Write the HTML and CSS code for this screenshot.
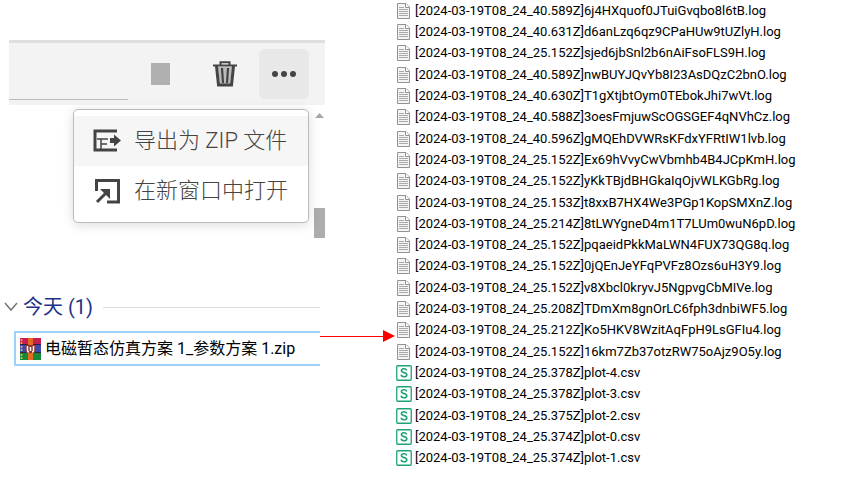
FILE: index.html
```html
<!DOCTYPE html>
<html lang="zh-CN">
<head>
<meta charset="utf-8">
<meta name="viewport" content="width=device-width, initial-scale=1">
<title>导出为 ZIP 文件</title>
<link rel="stylesheet" href="styles.css">
</head>
<body>
<svg class="sprite" aria-hidden="true">
  <symbol id="log" viewBox="0 0 13 16">
    <path d="M.5.5h8.500l3.500 3.500v11.500h-12z" fill="#f4f4f4" stroke="#929292"/>
    <path d="M8.500.5v4h4" fill="#fff" stroke="#929292"/>
    <path d="M2 4.500h5M2 6.500h9M2 8.500h9M2 10.500h9M2 12.500h9" stroke="#aaa"/>
  </symbol>
  <symbol id="csv" viewBox="0 0 16 16">
    <rect x=".75" y=".75" width="14.500" height="14.500" rx="1" fill="#fff" stroke="#1da374" stroke-width="1.300"/>
    <path d="M10.700 5.400C10.300 4.200 9.300 3.700 8 3.700c-1.500 0-2.600.7-2.600 1.900 0 2.700 5.400 1.300 5.400 4.100 0 1.300-1.200 2-2.800 2-1.500 0-2.600-.6-2.900-1.900" fill="none" stroke="#1da374" stroke-width="1.600"/>
  </symbol>
</svg>
<main class="page">
  <div class="left">
    <section class="viewer">
      <div class="toolbar">
        <input class="field" type="text" aria-label="名称">
        <button class="tool" aria-label="停止"><svg width="19" height="22"><path d="M0 0h19v22H0z" fill="#b0b0b0"/></svg></button>
        <button class="tool" aria-label="删除"><svg width="24" height="26" viewBox="0 0 24 26" fill="none" stroke="#444"><path d="M5 6h14l-2 18H7z" fill="#bbb" stroke="none"/><path d="M0 4.500h24" stroke-width="2"/><path d="M7.500 4V1.200h9V4" stroke-width="2"/><path d="M3.500 5l2 19h13l2-19" stroke-width="3"/><path d="M9 7l1 15M15 7l-1 15" stroke-width="2.200"/></svg></button>
        <button class="tool more" aria-label="更多" aria-expanded="true"><svg width="26" height="8" fill="#444"><circle cx="4" cy="4" r="3"/><circle cx="13" cy="4" r="3"/><circle cx="22" cy="4" r="3"/></svg></button>
      </div>
      <div class="track">
        <svg width="9" height="5"><path d="M0 5l4.500-5L9 5z" fill="#a8a8a8"/></svg>
        <span class="thumb"></span>
      </div>
      <div class="menu">
        <button class="item active"><svg width="28" height="24" viewBox="0 0 28 24" fill="none" stroke="#444"><path d="M24 2H2v19h22" stroke-width="3"/><path d="M4 10h11M8 10v10M8 15h6" stroke-width="1.500"/><path d="M17 9h4V5.500l7 6-7 6V14h-4z" fill="#444" stroke="none"/></svg><span>导出为 ZIP 文件</span></button>
        <button class="item"><svg width="28" height="26" viewBox="0 0 28 26" fill="none" stroke="#444" stroke-width="3"><path d="M3.500 13V2.500h22v21.500H14"/><path d="M4 24L14 14"/><path d="M7 11h10v10z" fill="#444" stroke="none"/></svg><span>在新窗口中打开</span></button>
      </div>
    </section>
    <section class="folder">
      <h2 class="group"><svg width="14" height="10" fill="none" stroke="#777" stroke-width="1.500"><path d="M1 1l6 7 6-7"/></svg>今天 (1)</h2>
      <a class="archive" href="#files">
        <svg width="21" height="24" viewBox="0 0 21 24"><path d="M0 1h21v7H0z" fill="#c51f52"/><path d="M0 8h21v8H0z" fill="#3f48ae"/><path d="M0 16h21v7H0z" fill="#148a38"/><path d="M0 7.500h21M0 15.500h21" stroke="#312040"/><path d="M1.500 2v5M1.500 9v5M1.500 17v5" stroke="#ffb72d" stroke-width="1.500" stroke-dasharray="2 1"/><path d="M8 1h5v22H8z" fill="#e76a20"/><path d="M6 8h9v8H6z" fill="#8e342d"/><path d="M7.500 9v4.500q0 1.500 1.500 1.500M13.500 9v4.500q0 1.500-1.500 1.500" fill="none" stroke="#fff" stroke-width="1.500"/><path d="M10.500 10v4" stroke="#fff" stroke-width="1.500"/></svg>
        <span>电磁暂态仿真方案 1_参数方案 1.zip</span>
      </a>
    </section>
  </div>
  <div class="link"><span class="line"></span><svg width="12" height="12"><path d="M0 0l12 6-12 6z" fill="#f00"/></svg></div>
  <ul class="files" id="files">
    <li><svg class="log"><use href="#log"/></svg>[2024-03-19T08_24_40.589Z]6j4HXquof0JTuiGvqbo8l6tB.log</li>
    <li><svg class="log"><use href="#log"/></svg>[2024-03-19T08_24_40.631Z]d6anLzq6qz9CPaHUw9tUZlyH.log</li>
    <li><svg class="log"><use href="#log"/></svg>[2024-03-19T08_24_25.152Z]sjed6jbSnl2b6nAiFsoFLS9H.log</li>
    <li><svg class="log"><use href="#log"/></svg>[2024-03-19T08_24_40.589Z]nwBUYJQvYb8I23AsDQzC2bnO.log</li>
    <li><svg class="log"><use href="#log"/></svg>[2024-03-19T08_24_40.630Z]T1gXtjbtOym0TEbokJhi7wVt.log</li>
    <li><svg class="log"><use href="#log"/></svg>[2024-03-19T08_24_40.588Z]3oesFmjuwScOGSGEF4qNVhCz.log</li>
    <li><svg class="log"><use href="#log"/></svg>[2024-03-19T08_24_40.596Z]gMQEhDVWRsKFdxYFRtIW1lvb.log</li>
    <li><svg class="log"><use href="#log"/></svg>[2024-03-19T08_24_25.152Z]Ex69hVvyCwVbmhb4B4JCpKmH.log</li>
    <li><svg class="log"><use href="#log"/></svg>[2024-03-19T08_24_25.152Z]yKkTBjdBHGkaIqOjvWLKGbRg.log</li>
    <li><svg class="log"><use href="#log"/></svg>[2024-03-19T08_24_25.153Z]t8xxB7HX4We3PGp1KopSMXnZ.log</li>
    <li><svg class="log"><use href="#log"/></svg>[2024-03-19T08_24_25.214Z]8tLWYgneD4m1T7LUm0wuN6pD.log</li>
    <li><svg class="log"><use href="#log"/></svg>[2024-03-19T08_24_25.152Z]pqaeidPkkMaLWN4FUX73QG8q.log</li>
    <li><svg class="log"><use href="#log"/></svg>[2024-03-19T08_24_25.152Z]0jQEnJeYFqPVFz8Ozs6uH3Y9.log</li>
    <li><svg class="log"><use href="#log"/></svg>[2024-03-19T08_24_25.152Z]v8Xbcl0kryvJ5NgpvgCbMIVe.log</li>
    <li><svg class="log"><use href="#log"/></svg>[2024-03-19T08_24_25.208Z]TDmXm8gnOrLC6fph3dnbiWF5.log</li>
    <li><svg class="log"><use href="#log"/></svg>[2024-03-19T08_24_25.212Z]Ko5HKV8WzitAqFpH9LsGFIu4.log</li>
    <li><svg class="log"><use href="#log"/></svg>[2024-03-19T08_24_25.152Z]16km7Zb37otzRW75oAjz9O5y.log</li>
    <li><svg class="csv"><use href="#csv"/></svg>[2024-03-19T08_24_25.378Z]plot-4.csv</li>
    <li><svg class="csv"><use href="#csv"/></svg>[2024-03-19T08_24_25.378Z]plot-3.csv</li>
    <li><svg class="csv"><use href="#csv"/></svg>[2024-03-19T08_24_25.375Z]plot-2.csv</li>
    <li><svg class="csv"><use href="#csv"/></svg>[2024-03-19T08_24_25.374Z]plot-0.csv</li>
    <li><svg class="csv"><use href="#csv"/></svg>[2024-03-19T08_24_25.374Z]plot-1.csv</li>
  </ul>
</main>
</body>
</html>
```
FILE: styles.css
```css
* { box-sizing: border-box; }
body { margin: 0; background: #fff; color: #000; font-family: Roboto, "Noto Sans CJK SC", sans-serif; }
svg { display: block; flex: none; }
.sprite { position: absolute; width: 0; height: 0; }
button { border: 0; padding: 0; background: none; font: inherit; color: inherit; }

.page { display: grid; grid-template-columns: 320fr 76fr 458fr; min-height: 100vh; }
.left { padding-top: 40px; min-width: 0; }

.viewer { position: relative; margin: 0 -5px 0 9px; }
.toolbar { display: flex; align-items: center; gap: 15px; height: 65px; padding-right: 16px; background: #f3f3f3; border-top: 3px solid #dfdfdf; }
.field { flex: 1; min-width: 0; height: 52px; margin-right: -8px; border: 0; border-bottom: 1px solid #bbb; background: none; outline: 0; }
.tool { display: grid; place-items: center; width: 50px; height: 50px; border-radius: 6px; }
.more { margin-left: -6px; background: #e8e8e8; }
.track { display: flex; flex-direction: column; align-items: center; justify-content: space-between; width: 11px; height: 133px; margin-left: auto; padding-top: 8px; }
.thumb { width: 11px; height: 30px; background: #adadad; }

.menu { position: absolute; top: 69px; right: 16px; width: 236px; padding: 6px 0; border: 1px solid #bbb; border-radius: 5px; background: #fff; box-shadow: 0 2px 12px rgba(0, 0, 0, .14); }
.item { display: flex; align-items: center; gap: 13px; width: 100%; height: 50px; padding-left: 19px; color: #444; font-size: 22px; font-weight: 300; line-height: 32px; white-space: nowrap; }
.active { background: #f6f6f6; }

.folder { margin-top: 54px; }
.group { display: flex; align-items: center; gap: 5px; margin: 0; padding-left: 4px; color: #1e3287; font-size: 20px; font-weight: 400; line-height: 30px; }
.group::after { content: ""; flex: 1; height: 1px; margin-left: 5px; background: #ddd; }
.archive { display: flex; align-items: center; gap: 4px; height: 35px; margin: 9px 0 0 14px; padding-left: 4px; border: 2px solid #9dd2fb; border-right: 0; color: #000; font-size: 16px; line-height: 24px; text-decoration: none; white-space: nowrap; }

.link { display: flex; align-items: center; height: 12px; margin: 330px 1px 0 0; }
.line { flex: 1; height: 1px; background: #f00; }

.files { display: grid; grid-auto-rows: 1fr; margin: 0; padding: 0 0 8px; list-style: none; font-size: 13px; line-height: 20px; }
.files li { display: flex; align-items: center; white-space: nowrap; }
.log { width: 13px; height: 16px; margin: 0 5px 0 1px; }
.csv { width: 16px; height: 16px; margin-right: 3px; }
```
